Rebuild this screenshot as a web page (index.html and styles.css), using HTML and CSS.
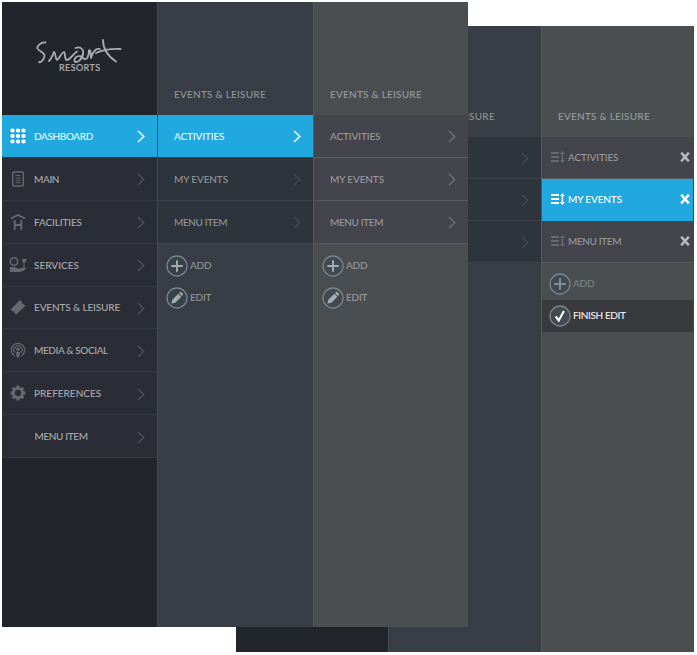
FILE: index.html
```html
<!DOCTYPE html>
<html lang="en">
<head>
<meta charset="utf-8">
<title>Smart Resorts</title>
<link rel="stylesheet" href="styles.css">
</head>
<body>
<svg class="defs" width="0" height="0">
  <symbol id="chev" viewBox="0 0 8 13"><path d="M1 1l5.8 5.5L1 12" fill="none" stroke="currentColor" stroke-width="var(--sw,1.200)"/></symbol>
  <symbol id="plus" viewBox="0 0 22 22"><circle cx="11" cy="11" r="10" class="disc"/><path d="M11 5.3v11.4M5.3 11h11.4" stroke="currentColor" stroke-width="1.9"/></symbol>
  <symbol id="pencil" viewBox="0 0 22 22"><circle cx="11" cy="11" r="10" class="disc"/><path d="M5.400 16.600l.9-3.800 6-6 3 3-6 6zM13 6.100l1.100-1.100q.6-.4 1.200.2l1.600 1.600q.5.6 0 1.100l-1 1z" fill="currentColor"/></symbol>
  <symbol id="check" viewBox="0 0 22 22"><circle cx="11" cy="11" r="10" class="disc"/><path d="M6.7 11.4l3 4.2 5.2-9.5" fill="none" stroke="currentColor" stroke-width="2.1"/></symbol>
  <symbol id="sort" viewBox="0 0 14 12"><path d="M0 2h8M0 6h8M0 10h8" stroke="currentColor" stroke-width="1.8"/><path d="M11.4 0l2.4 3h-1.7v6h1.7l-2.4 3L9 9h1.7V3H9z" fill="currentColor"/></symbol>
  <symbol id="close" viewBox="0 0 10 10"><path d="M1.2 .7l7.600 8.600M8.800 .7l-7.600 8.600" stroke="currentColor" stroke-width="2.500"/></symbol>
</svg>
<main class="stage">
  <section class="screen back">
    <div class="col nav"></div>
    <div class="col mid">
      <h2>EVENTS &amp; LEISURE</h2>
      <div class="row"><span>ACTIVITIES</span><svg class="chev"><use href="#chev"/></svg></div>
      <div class="row"><span>MY EVENTS</span><svg class="chev"><use href="#chev"/></svg></div>
      <div class="row"><span class="tight">MENU ITEM</span><svg class="chev"><use href="#chev"/></svg></div>
    </div>
    <div class="col sub">
      <h2>EVENTS &amp; LEISURE</h2>
      <div class="row"><svg class="sort"><use href="#sort"/></svg><span>ACTIVITIES</span><svg class="close"><use href="#close"/></svg></div>
      <div class="row active"><svg class="sort"><use href="#sort"/></svg><span>MY EVENTS</span><svg class="close"><use href="#close"/></svg></div>
      <div class="row"><svg class="sort"><use href="#sort"/></svg><span class="tight">MENU ITEM</span><svg class="close"><use href="#close"/></svg></div>
      <div class="tools">
        <div class="tool"><svg><use href="#plus"/></svg><span>ADD</span></div>
        <div class="tool finish"><svg><use href="#check"/></svg><span class="tight">FINISH EDIT</span></div>
      </div>
    </div>
  </section>

  <section class="screen front">
    <div class="col nav">
      <div class="brand">
        <svg class="script" viewBox="0 0 86 34"><path d="M9.500 5.500C5 5 .8 9 1.500 11.500C3 15 9 15 8.500 19C8 23 4.500 26 3 25M13 24C16 21 17 17 18 15C20 16 19 22 21 23C24 21 25 16 28 15C30 17 28 23 31 23C35 22 37 17 41 14.500M39.500 11C44 9 48 12 47 17C46 23 40 27 38.500 24C38 19 45 17 48 22C51 23 53 19 53 13.500C54 12 55 15 55 21C57 14 60 11 64 12M67 3C67 10 70 18 80 24.500M60 16C67 13 76 11.500 84.500 12" fill="none" stroke="currentColor" stroke-width="1.800" stroke-linecap="round" stroke-linejoin="round"/></svg>
        <span>RESORTS</span>
      </div>
      <div class="row active"><svg class="icon" viewBox="0 0 18 18"><path d="M3.300 3.400h.4M8.800 3.400h.4M14.300 3.400h.4M3.300 9h.4M8.800 9h.4M14.300 9h.4M3.300 14.600h.4M8.800 14.600h.4M14.300 14.600h.4" stroke="currentColor" stroke-width="4" stroke-linecap="round"/></svg><span class="tight">DASHBOARD</span><svg class="chev"><use href="#chev"/></svg></div>
      <div class="row"><svg class="icon" viewBox="0 0 18 18"><rect x="3.700" y="2" width="10.600" height="14" rx="1" fill="none" stroke="currentColor" stroke-width="1.400"/><path d="M6.500 5.500h5M6.500 8h5M6.500 10.300h5M6.500 12.700h5" stroke="currentColor"/></svg><span class="tight">MAIN</span><svg class="chev"><use href="#chev"/></svg></div>
      <div class="row"><svg class="icon" viewBox="0 0 18 18"><path d="M2 5.500L9 2l7 3.500M5.700 7v10M12.300 7v10M5.700 12h7" fill="none" stroke="currentColor" stroke-width="1.800"/></svg><span>FACILITIES</span><svg class="chev"><use href="#chev"/></svg></div>
      <div class="row"><svg class="icon" viewBox="0 0 18 18"><circle cx="5" cy="5.500" r="3.700" fill="none" stroke="currentColor" stroke-width="1.500"/><path d="M1 11h5l3 1.800 6-1.500 2.500.4-2.500 3-5 1.300H1z" fill="currentColor"/><path d="M15 5v6" stroke="currentColor"/><path d="M13 3h4.500l-.8 3.500h-3z" fill="currentColor"/></svg><span class="loose">SERVICES</span><svg class="chev"><use href="#chev"/></svg></div>
      <div class="row"><svg class="icon" viewBox="0 0 18 18"><path d="M1.500 11.500L11 2l2 1.700-.3 1.800 1.700.2L16.500 8 7 16.500l-1.800-1.800.3-1.500-1.900.1z" fill="currentColor"/></svg><span>EVENTS &amp; LEISURE</span><svg class="chev"><use href="#chev"/></svg></div>
      <div class="row"><svg class="icon" viewBox="0 0 18 18"><path d="M5.500 14.800a6.700 6.700 0 1 1 7 0M6 11.600a4 4 0 1 1 6 0" fill="none" stroke="currentColor" stroke-width="1.200"/><circle cx="9" cy="8.200" r="1.700" fill="currentColor"/><path d="M7 10.700h4l-.8 5.800H7.800z" fill="currentColor"/></svg><span class="tight">MEDIA &amp; SOCIAL</span><svg class="chev"><use href="#chev"/></svg></div>
      <div class="row"><svg class="icon" viewBox="0 0 18 18"><circle cx="9" cy="9" r="4.600" fill="none" stroke="currentColor" stroke-width="2.900"/><path d="M9 1.500v3M9 13.500v3M1.500 9h3M13.500 9h3M3.700 3.700l2 2M12.300 12.300l2 2M3.700 14.300l2-2M12.300 5.700l2-2" stroke="currentColor" stroke-width="3"/></svg><span class="loose">PREFERENCES</span><svg class="chev"><use href="#chev"/></svg></div>
      <div class="row"><span class="bare tight">MENU ITEM</span><svg class="chev"><use href="#chev"/></svg></div>
    </div>
    <div class="col mid">
      <h2>EVENTS &amp; LEISURE</h2>
      <div class="row active"><span>ACTIVITIES</span><svg class="chev"><use href="#chev"/></svg></div>
      <div class="row"><span>MY EVENTS</span><svg class="chev"><use href="#chev"/></svg></div>
      <div class="row"><span class="tight">MENU ITEM</span><svg class="chev"><use href="#chev"/></svg></div>
      <div class="tools">
        <div class="tool"><svg><use href="#plus"/></svg><span>ADD</span></div>
        <div class="tool"><svg><use href="#pencil"/></svg><span>EDIT</span></div>
      </div>
    </div>
    <div class="col sub">
      <h2>EVENTS &amp; LEISURE</h2>
      <div class="row"><span>ACTIVITIES</span><svg class="chev"><use href="#chev"/></svg></div>
      <div class="row"><span>MY EVENTS</span><svg class="chev"><use href="#chev"/></svg></div>
      <div class="row"><span class="tight">MENU ITEM</span><svg class="chev"><use href="#chev"/></svg></div>
      <div class="tools">
        <div class="tool"><svg><use href="#plus"/></svg><span>ADD</span></div>
        <div class="tool"><svg><use href="#pencil"/></svg><span>EDIT</span></div>
      </div>
    </div>
  </section>
</main>
</body>
</html>
```
FILE: styles.css
```css
* { box-sizing: border-box; }
body { margin: 0; background: #fff; font: 500 10px/14px Lato, "Liberation Sans", sans-serif; }
.defs { position: absolute; }
.stage { position: relative; width: 697px; height: 655px; overflow: hidden; }

/* Two overlapping application windows */
.screen { position: absolute; display: grid; overflow: hidden; }
.front { left: 2px; top: 2px; width: 466px; height: 625px; grid-template-columns: 155px 156px 155px; --row: 42.875px; --head: 113px; }
.back { left: 236px; top: 26px; width: 458px; height: 626px; grid-template-columns: 152px 153px 153px; --row: 42px; --head: 110.500px; }

.col { border-left: 1px solid #454950; min-width: 0; }
.nav { background: #22252c; border-left: 0; --cell: #2a2d35; --line: #343840; color: #a9abad; --chev: #50545b; }
.mid { background: #393d45; --cell: #2e343c; --line: #3b424a; color: #929599; --chev: #464b52; --disc: #364149; }
.sub { background: #4b4e51; border-left-color: #565a5e; --cell: #43444c; --line: #575a60; color: #989a9e; --chev: #74767c; --disc: #404a50; }

h2 { margin: 0; height: var(--head); padding: 0 0 14px 16px; display: flex; align-items: flex-end; font: inherit; letter-spacing: .23px; white-space: nowrap; }
.row { height: var(--row); padding: 0 12px 0 16px; display: flex; align-items: center; background: var(--cell); border-bottom: 1px solid var(--line); white-space: nowrap; }
.row span { flex: 1; letter-spacing: -.13px; }
.row .tight, .tool .tight { letter-spacing: -.38px; }
.row .loose { letter-spacing: 0; }
.row.active { background: #20a8df; color: #e9f8ff; --chev: #d9f4ff; --sw: 1.700; }
.chev { width: 8px; height: 13px; color: var(--chev); flex: none; margin-top: 2px; }

.nav .row { padding-left: 7px; }
.icon { width: 18px; height: 18px; margin-right: 7px; color: #666a70; flex: none; }
.active .icon { color: #fff; }
.bare { padding-left: 25.500px; }

.brand { height: 113px; padding: 35px 0 0 34px; color: #aaacaf; }
.brand svg { display: block; width: 86px; height: 34px; }
.brand span { display: block; margin: -10px 0 0 23px; font-size: 9px; letter-spacing: .4px; -webkit-text-stroke: .2px; }

.tools { padding-top: 6px; }
.tool { height: 32px; display: flex; align-items: center; gap: 2px; padding-left: 8px; letter-spacing: -.2px; }
.tool span { margin-top: -1px; }
.tool svg { width: 22px; height: 22px; margin-top: 1px; color: #a8acaf; }
.disc { fill: var(--disc); stroke: #7d8489; stroke-width: 1.300; }

.back .mid h2 { padding-left: 14px; }
.back .sub { border-right: 1px solid #43464b; }
.back .sub .row { padding: 0 3px 0 9px; }
.back .sub .active { border-color: #20a8df; color: #fff; }
.sort { width: 14px; height: 12px; margin-right: 3px; color: #686a72; }
.active .sort { color: #fff; }
.close { width: 10px; height: 10px; color: #b8babd; }
.active .close { color: #fff; }
.back .tools { padding-top: 5px; }
.back .tool { gap: 2px; padding-left: 7px; color: #808387; }
.back .tool svg { color: #8b8f92; }
.back .finish { background: #393a3d; color: #f0f0f0; }
.back .finish svg { color: #fff; }
.finish .disc { stroke: #c2c5c7; }
```
